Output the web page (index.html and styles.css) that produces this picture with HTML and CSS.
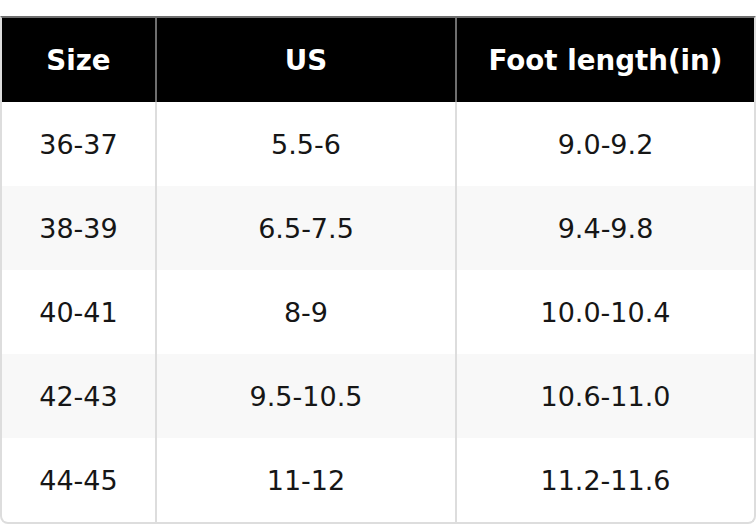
FILE: index.html
```html
<!DOCTYPE html>
<html>
<head>
<meta charset="utf-8">
<link rel="stylesheet" href="styles.css">
</head>
<body>
<div class="wrap">
<table class="size-table">
<thead>
<tr><th class="c1">Size</th><th class="c2">US</th><th class="c3">Foot length(in)</th></tr>
</thead>
<tbody>
<tr><td>36-37</td><td>5.5-6</td><td>9.0-9.2</td></tr>
<tr><td>38-39</td><td>6.5-7.5</td><td>9.4-9.8</td></tr>
<tr><td>40-41</td><td>8-9</td><td>10.0-10.4</td></tr>
<tr><td>42-43</td><td>9.5-10.5</td><td>10.6-11.0</td></tr>
<tr><td>44-45</td><td>11-12</td><td>11.2-11.6</td></tr>
</tbody>
</table>
</div>
</body>
</html>
```

FILE: styles.css
```css
html, body {
  margin: 0;
  padding: 0;
  background: #ffffff;
}
body {
  padding-top: 16px;
  font-family: "DejaVu Sans", Verdana, sans-serif;
}
.wrap {
  width: 756px;
  box-sizing: border-box;
  border: 2px solid #dddddd;
  border-top-color: #6e6e6e;
  border-radius: 0 0 8px 8px;
  overflow: hidden;
}
.size-table {
  width: 100%;
  border-collapse: collapse;
  table-layout: fixed;
}
.size-table th {
  background: #000000;
  color: #ffffff;
  font-weight: bold;
  font-size: 27.7px;
  height: 84px;
  padding: 0;
  text-align: center;
  vertical-align: middle;
  border-left: 2px solid #6e6e6e;
}
.size-table th:first-child {
  border-left: none;
}
.size-table .c1 { width: 153px; }
.size-table .c2 { width: 298px; }
.size-table td {
  font-size: 27px;
  color: #161616;
  height: 84px;
  padding: 0;
  text-align: center;
  vertical-align: middle;
  border-left: 2px solid #dddddd;
}
.size-table td:first-child {
  border-left: none;
}
.size-table tbody tr:nth-child(even) td {
  background: #f8f8f8;
}
```
